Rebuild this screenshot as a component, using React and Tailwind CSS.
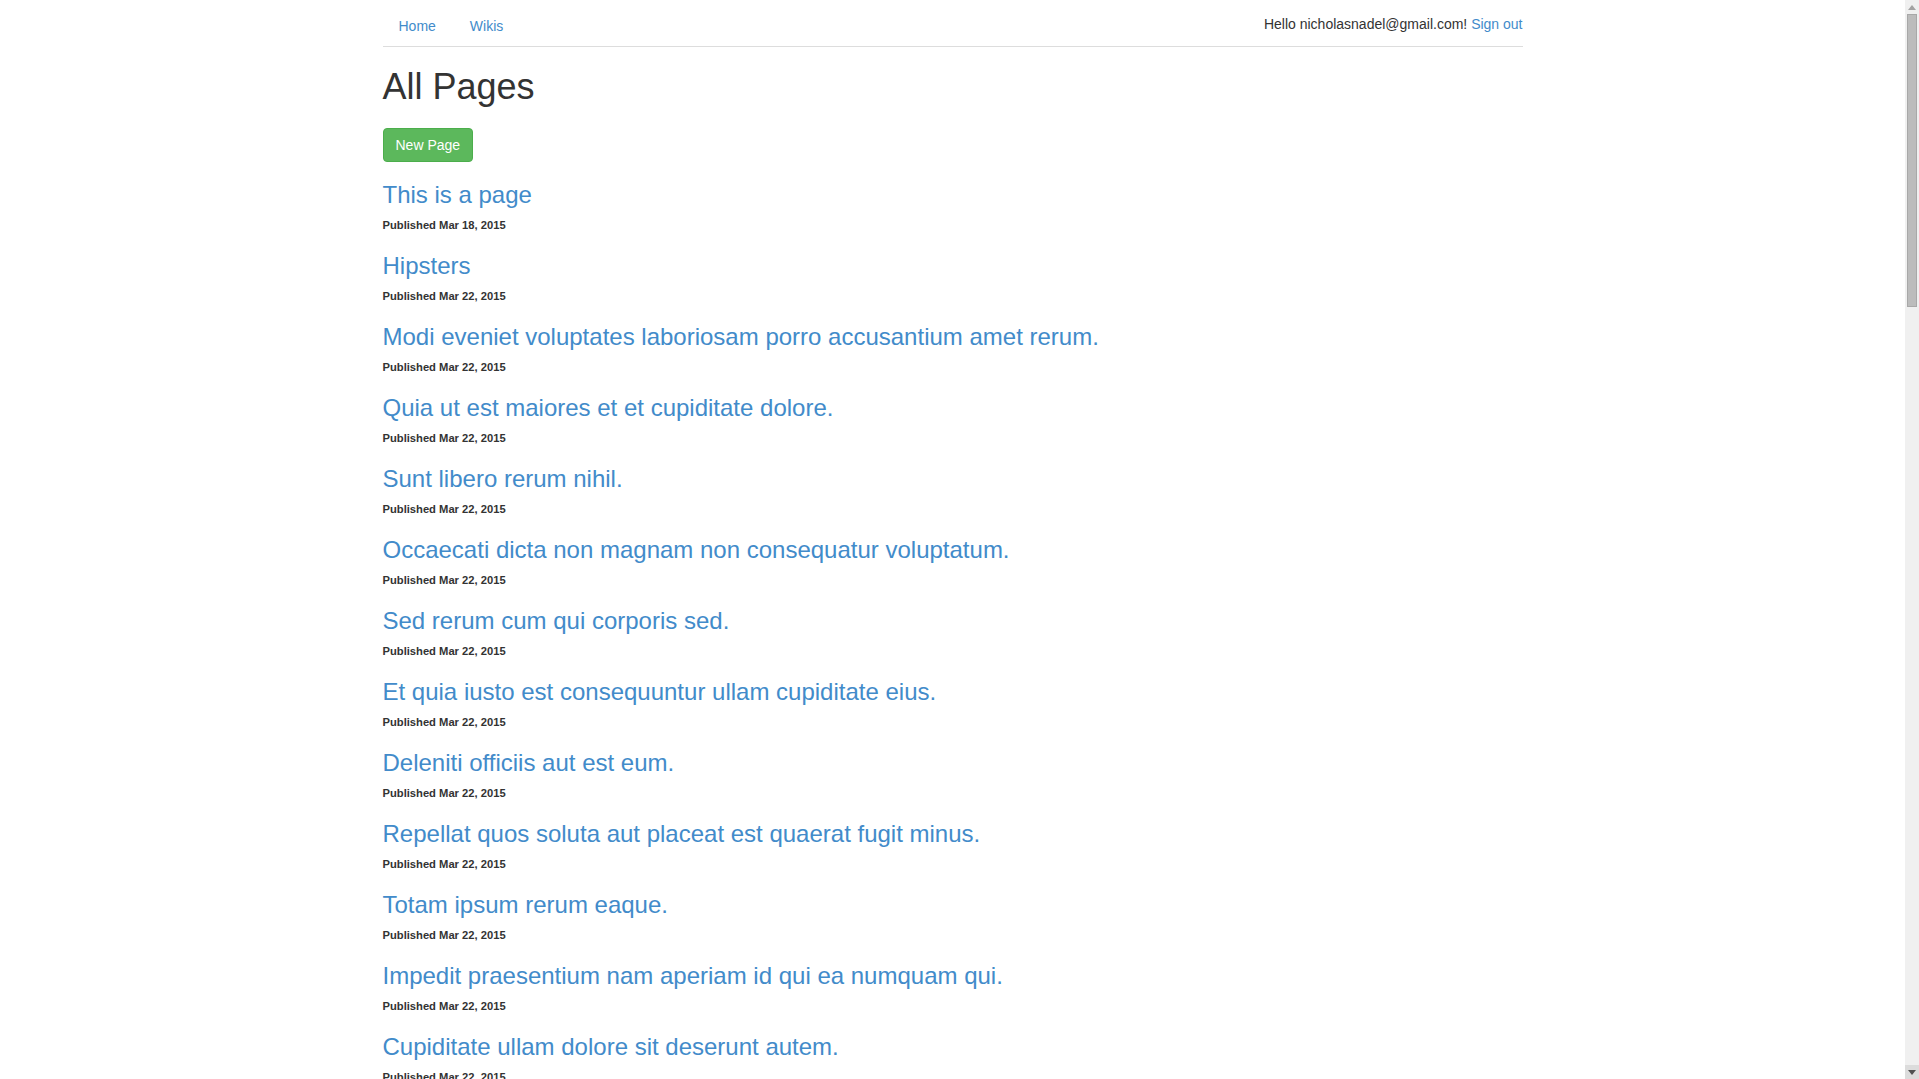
import React from "react";

const pages = [
  ["This is a page", "Mar 18, 2015"],
  ["Hipsters", "Mar 22, 2015"],
  ["Modi eveniet voluptates laboriosam porro accusantium amet rerum.", "Mar 22, 2015"],
  ["Quia ut est maiores et et cupiditate dolore.", "Mar 22, 2015"],
  ["Sunt libero rerum nihil.", "Mar 22, 2015"],
  ["Occaecati dicta non magnam non consequatur voluptatum.", "Mar 22, 2015"],
  ["Sed rerum cum qui corporis sed.", "Mar 22, 2015"],
  ["Et quia iusto est consequuntur ullam cupiditate eius.", "Mar 22, 2015"],
  ["Deleniti officiis aut est eum.", "Mar 22, 2015"],
  ["Repellat quos soluta aut placeat est quaerat fugit minus.", "Mar 22, 2015"],
  ["Totam ipsum rerum eaque.", "Mar 22, 2015"],
  ["Impedit praesentium nam aperiam id qui ea numquam qui.", "Mar 22, 2015"],
  ["Cupiditate ullam dolore sit deserunt autem.", "Mar 22, 2015"],
  ["Voluptatem et quia laborum.", "Mar 22, 2015"],
];

export default function App() {
  return (
    <div className="flex h-screen w-full overflow-hidden bg-white text-[#333] font-['Liberation_Sans',Arial,sans-serif]">
      <main className="flex-1 min-w-0">
        <div className="w-[1140px] mx-auto">
          <header className="flex justify-between items-start h-[47px] border-b border-[#dddddd]">
            <nav className="flex pt-[16px]">
              <a href="#" className="pl-[16px] pr-[15px] text-[14px] leading-[20px] text-[#428bca]">Home</a>
              <a href="#" className="ml-[4px] px-[15px] text-[14px] leading-[20px] text-[#428bca]">Wikis</a>
            </nav>
            <div className="pt-[14px] text-[14px] leading-[20px] text-[#333]">
              Hello nicholasnadel@gmail.com!{" "}
              <a href="#" className="text-[#428bca]">Sign out</a>
            </div>
          </header>

          <h1 className="mt-[20px] text-[36px] leading-[40px] font-normal text-[#333]">All Pages</h1>

          <div className="mt-[21px]">
            <button className="h-[34px] px-[12px] text-[14px] leading-[20px] text-white bg-[#5cb85c] border border-[#4cae4c] rounded-[4px]">
              New Page
            </button>
          </div>

          <div className="flex flex-col mt-[1px]">
            {pages.map(([title, date], i) => (
              <div key={i} className="pt-[19px]">
                <h3 className="text-[24px] leading-[26px] font-normal">
                  <a href="#" className="text-[#428bca]">{title}</a>
                </h3>
                <p className="mt-[9px] text-[11.2px] leading-[17px] font-bold text-[#333]">
                  Published {date}
                </p>
              </div>
            ))}
          </div>
        </div>
      </main>

      <div className="w-[14px] h-full flex flex-col bg-[#f0f0f0] shrink-0">
        <div className="h-[14px] flex items-center justify-center">
          <svg width="8" height="5" viewBox="0 0 8 5"><path d="M0 5 L4 0 L8 5 Z" fill="#a3a3a3" /></svg>
        </div>
        <div className="mx-[2px] h-[293px] bg-[#bcbcbc] border border-[#a8a8a8]" />
        <div className="flex-1" />
        <div className="h-[14px] flex items-center justify-center bg-[#dcdcdc]">
          <svg width="8" height="5" viewBox="0 0 8 5"><path d="M0 0 L8 0 L4 5 Z" fill="#505050" /></svg>
        </div>
      </div>
    </div>
  );
}
